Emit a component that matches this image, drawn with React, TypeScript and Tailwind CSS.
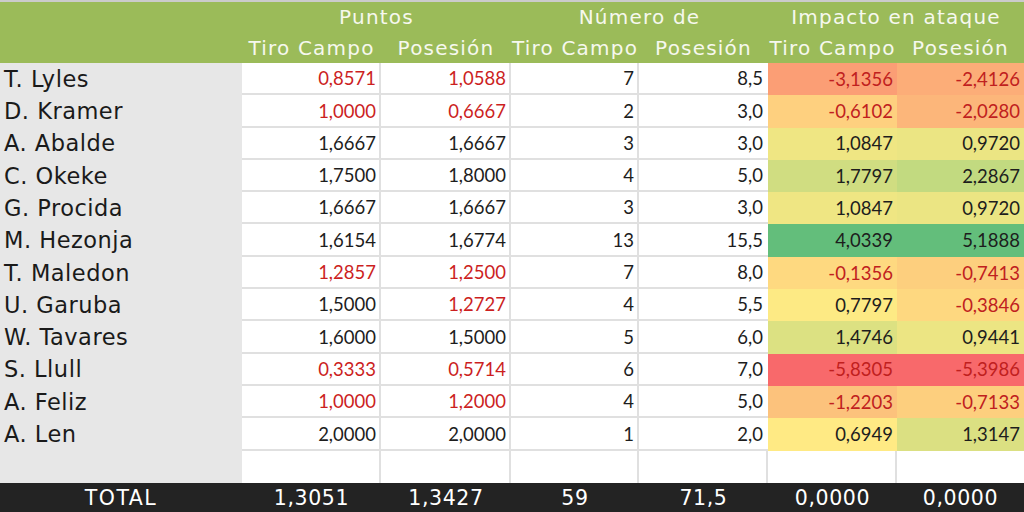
import React from 'react';

type Row = {
  name: string;
  ptc: string;
  pp: string;
  ntc: string;
  np: string;
  itc: string;
  ip: string;
  redT: boolean;
  redP: boolean;
  bgT: string;
  bgP: string;
};

const rows: Row[] = [
  { name: 'T. Lyles', ptc: '0,8571', pp: '1,0588', ntc: '7', np: '8,5', itc: '-3,1356', ip: '-2,4126', redT: true, redP: true, bgT: 'bg-[#fb9e75]', bgP: 'bg-[#fcad78]' },
  { name: 'D. Kramer', ptc: '1,0000', pp: '0,6667', ntc: '2', np: '3,0', itc: '-0,6102', ip: '-2,0280', redT: true, redP: true, bgT: 'bg-[#fed07f]', bgP: 'bg-[#fcb67a]' },
  { name: 'A. Abalde', ptc: '1,6667', pp: '1,6667', ntc: '3', np: '3,0', itc: '1,0847', ip: '0,9720', redT: false, redP: false, bgT: 'bg-[#efe683]', bgP: 'bg-[#ebe583]' },
  { name: 'C. Okeke', ptc: '1,7500', pp: '1,8000', ntc: '4', np: '5,0', itc: '1,7797', ip: '2,2867', redT: false, redP: false, bgT: 'bg-[#d0dd81]', bgP: 'bg-[#c2da80]' },
  { name: 'G. Procida', ptc: '1,6667', pp: '1,6667', ntc: '3', np: '3,0', itc: '1,0847', ip: '0,9720', redT: false, redP: false, bgT: 'bg-[#efe683]', bgP: 'bg-[#ebe583]' },
  { name: 'M. Hezonja', ptc: '1,6154', pp: '1,6774', ntc: '13', np: '15,5', itc: '4,0339', ip: '5,1888', redT: false, redP: false, bgT: 'bg-[#63be7b]', bgP: 'bg-[#63be7b]' },
  { name: 'T. Maledon', ptc: '1,2857', pp: '1,2500', ntc: '7', np: '8,0', itc: '-0,1356', ip: '-0,7413', redT: true, redP: true, bgT: 'bg-[#fed980]', bgP: 'bg-[#fdcf7e]' },
  { name: 'U. Garuba', ptc: '1,5000', pp: '1,2727', ntc: '4', np: '5,5', itc: '0,7797', ip: '-0,3846', redT: false, redP: true, bgT: 'bg-[#fdea84]', bgP: 'bg-[#fed880]' },
  { name: 'W. Tavares', ptc: '1,6000', pp: '1,5000', ntc: '5', np: '6,0', itc: '1,4746', ip: '0,9441', redT: false, redP: false, bgT: 'bg-[#dce182]', bgP: 'bg-[#ece583]' },
  { name: 'S. Llull', ptc: '0,3333', pp: '0,5714', ntc: '6', np: '7,0', itc: '-5,8305', ip: '-5,3986', redT: true, redP: true, bgT: 'bg-[#f8696b]', bgP: 'bg-[#f8696b]' },
  { name: 'A. Feliz', ptc: '1,0000', pp: '1,2000', ntc: '4', np: '5,0', itc: '-1,2203', ip: '-0,7133', redT: true, redP: true, bgT: 'bg-[#fcc27c]', bgP: 'bg-[#fdcf7e]' },
  { name: 'A. Len', ptc: '2,0000', pp: '2,0000', ntc: '1', np: '2,0', itc: '0,6949', ip: '1,3147', redT: false, redP: false, bgT: 'bg-[#ffea84]', bgP: 'bg-[#dbe082]' },
];

const cols = 'grid grid-cols-[242px_139px_130px_128px_129px_129px_127px]';
const verdana = "font-['DejaVu_Sans',Verdana,sans-serif]";
const num = "font-['Lato','Liberation_Sans',sans-serif] text-[18.5px]";
const red = 'text-[#cc1f1f]';
const dark = 'text-[#1d1d1d]';
const head = 'flex items-center justify-center whitespace-nowrap';

function Cell({ v, isRed, last }: { v: string; isRed?: boolean; last?: boolean }) {
  return (
    <div
      className={`flex items-center justify-end pt-[2px] bg-white border-b-2 border-[#e0e0e0] ${last ? 'pr-[5px]' : 'border-r-2 pr-[3px]'} ${num} ${isRed ? red : dark}`}
    >
      {v}
    </div>
  );
}

function Heat({ v, bg }: { v: string; bg: string }) {
  const neg = v.startsWith('-');
  return (
    <div className={`flex items-center justify-end pr-[4px] pt-[1px] ${bg} ${num} ${neg ? 'text-[#c0201e]' : dark}`}>
      {v}
    </div>
  );
}

export default function App() {
  return (
    <div className="w-[1024px] h-[512px] overflow-hidden bg-white flex flex-col">
      {/* header */}
      <div className={`${cols} h-[63px] shrink-0 bg-[#9bbb59] border-t-2 border-[#cbcbcb] text-[#f6f8ee] ${verdana} text-[20px] tracking-[1.2px]`}>
        <div />
        <div className={`col-span-2 h-[30px] ${head}`}>Puntos</div>
        <div className={`col-span-2 h-[30px] ${head}`}>Número de</div>
        <div className={`col-span-2 h-[30px] ${head}`}>Impacto en ataque</div>
        <div />
        <div className={`h-[30px] ${head}`}>Tiro Campo</div>
        <div className={`h-[30px] ${head}`}>Posesión</div>
        <div className={`h-[30px] ${head}`}>Tiro Campo</div>
        <div className={`h-[30px] ${head}`}>Posesión</div>
        <div className={`h-[30px] ${head}`}>Tiro Campo</div>
        <div className={`h-[30px] ${head}`}>Posesión</div>
      </div>

      {/* body */}
      <div className={`${cols} auto-rows-[32.3px]`}>
        {rows.map((r) => (
          <React.Fragment key={r.name}>
            <div className={`flex items-center pl-[4px] pt-[1px] bg-[#e7e7e7] ${verdana} text-[22.5px] tracking-[0.5px] text-[#1a1a1a]`}>{r.name}</div>
            <Cell v={r.ptc} isRed={r.redT} />
            <Cell v={r.pp} isRed={r.redP} />
            <Cell v={r.ntc} />
            <Cell v={r.np} last />
            <Heat v={r.itc} bg={r.bgT} />
            <Heat v={r.ip} bg={r.bgP} />
          </React.Fragment>
        ))}
        <div className="bg-[#e7e7e7]" />
        <div className="bg-white border-r-2 border-[#e0e0e0]" />
        <div className="bg-white border-r-2 border-[#e0e0e0]" />
        <div className="bg-white border-r-2 border-[#e0e0e0]" />
        <div className="bg-white border-r-2 border-[#e0e0e0]" />
        <div className="bg-white border-r-2 border-[#e0e0e0]" />
        <div className="bg-white" />
      </div>

      {/* total */}
      <div className={`${cols} flex-1 bg-[#232323] text-white ${verdana} text-[20.5px] tracking-[0.6px]`}>
        <div className="flex items-center justify-center tracking-[1.5px]">TOTAL</div>
        <div className="flex items-center justify-center">1,3051</div>
        <div className="flex items-center justify-center">1,3427</div>
        <div className="flex items-center justify-center">59</div>
        <div className="flex items-center justify-center">71,5</div>
        <div className="flex items-center justify-center">0,0000</div>
        <div className="flex items-center justify-center">0,0000</div>
      </div>
    </div>
  );
}
